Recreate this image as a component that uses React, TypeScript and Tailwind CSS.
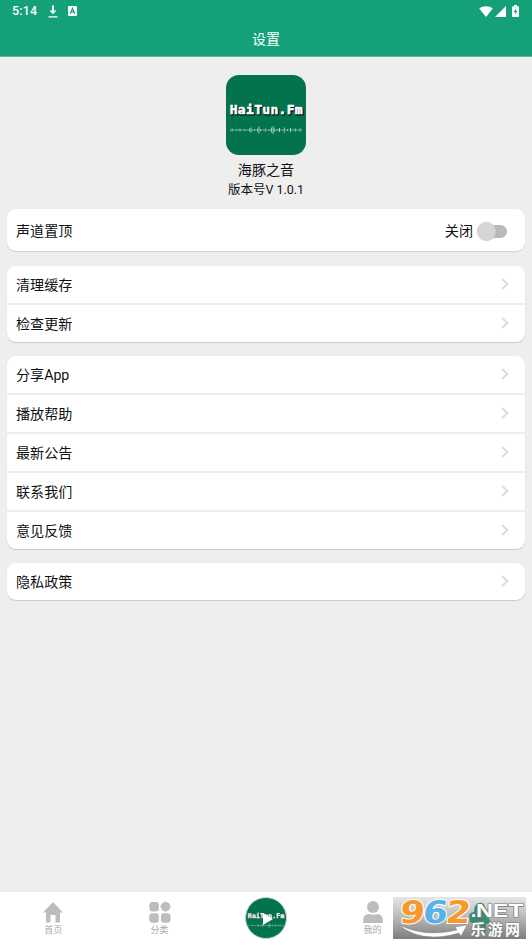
import React, { useState } from "react";

const groups = [
  ["清理缓存", "检查更新"],
  ["分享App", "播放帮助", "最新公告", "联系我们", "意见反馈"],
  ["隐私政策"],
];

// bar heights of the little sound wave under the logo text
const wave = [1, 3, 1, 1, 2, 1, 3, 1, 1, 2, 1, 1, 3, 5, 1, 2, 1, 3, 7, 2, 1, 1, 3, 1, 1, 2, 5, 8, 3, 1, 2, 4, 1, 1, 5, 1, 2, 1, 4, 1, 1, 3, 1, 1, 3, 1];

function LogoArt({ className }: { className: string }) {
  return (
    <svg className={className} viewBox="0 0 80 80">
      <g
        fontFamily="'DejaVu Sans Mono', monospace"
        fontWeight="bold"
        fontSize="13"
        textAnchor="middle"
        strokeLinejoin="round"
      >
        <text x="41.2" y="40.4" textLength="73" fill="#001a10" stroke="#001a10" strokeWidth="1.2">
          HaiTun.Fm
        </text>
        <text x="40.2" y="39.4" textLength="73" fill="#fff" stroke="#fff" strokeWidth="0.6">
          HaiTun.Fm
        </text>
      </g>
      <g fill="#a9d3c1">
        {wave.map((h, i) => (
          <rect key={i} x={4 + i * 1.58} y={55 - h / 2} width="1" height={h} />
        ))}
      </g>
    </svg>
  );
}

function StatusBar() {
  return (
    <div className="flex h-[22px] items-center pl-[12px] pr-[13px] text-white">
      <span className="font-['Roboto',sans-serif] text-[12.5px] font-medium leading-none tracking-[0.2px]">
        5:14
      </span>
      <svg className="ml-[11px] h-[13px] w-[10px]" viewBox="0 0 10 13" fill="currentColor">
        <path d="M4 .5h2v5h2.600L5 9.200 1.400 5.500H4zM.5 11.300h9v1.100h-9z" />
      </svg>
      <svg className="ml-[10px] h-[10px] w-[9px]" viewBox="0 0 9 10">
        <rect width="9" height="10" rx="1" fill="#fff" />
        <path d="M2.300 7.700 4.500 2.300l2.200 5.400M3.200 5.900h2.600" fill="none" stroke="#14a079" strokeWidth="1.200" />
      </svg>
      <svg className="ml-auto h-[11px] w-[14px]" viewBox="0 0 14 11" fill="currentColor">
        <path d="M7 11 .2 2.500C4-.6 10-.6 13.800 2.500z" />
      </svg>
      <svg className="ml-[2px] h-[11px] w-[11px]" viewBox="0 0 11 11" fill="currentColor">
        <path d="M11 0v11H0z" />
      </svg>
      <svg className="ml-[6px] h-[12px] w-[7px]" viewBox="0 0 7 12">
        <path d="M2 0h3v1.300h1.200q.8 0 .8.800v9.100q0 .8-.8.800H.8q-.8 0-.8-.8V2.100q0-.8.800-.8H2z" fill="#fff" />
        <path d="M4.100 3.200 1.800 7h1.500v2.800L5.400 6H4.100z" fill="#14a079" />
      </svg>
    </div>
  );
}

function Row({ label }: { label: string }) {
  return (
    <div className="flex h-[37px] items-center justify-between pl-[9px] pr-[16px]">
      <span className="pt-[2px] text-[14.1px] leading-none">{label}</span>
      <svg className="mb-[1px] h-[12px] w-[8px]" viewBox="0 0 8 12" fill="none" stroke="#dcdcdc" strokeWidth="2">
        <path d="M1.200 1 6.300 6 1.200 11" />
      </svg>
    </div>
  );
}

function Watermark() {
  return (
    <svg className="absolute left-[393px] top-[5px] h-[42px] w-[133px] overflow-visible" viewBox="0 0 133 42">
      <defs>
        <linearGradient id="plate" x1="0" y1="0" x2="0" y2="1">
          <stop offset="0" stopColor="#e6e6e6" />
          <stop offset="0.500" stopColor="#b7b7b7" />
          <stop offset="1" stopColor="#7d7d7d" />
        </linearGradient>
      </defs>
      <rect width="133" height="42" fill="url(#plate)" />
      <path d="M76 18q2-3 5-3 0-8 5-9 5-1 6 4 4 5 3 9l3 7-5 1v8H83v-8l-6-2z" fill="#398c70" />
      <g
        fontFamily="'DejaVu Sans', sans-serif"
        fontWeight="bold"
        fontSize="31"
        stroke="#fff"
        strokeWidth="2"
        strokeLinejoin="round"
        paintOrder="stroke"
        transform="translate(3.500 0) skewX(-7)"
      >
        <text x="5.500" y="25.500" textLength="25" lengthAdjust="spacingAndGlyphs" fill="#f7982a">9</text>
        <text x="28.500" y="25.500" textLength="25" lengthAdjust="spacingAndGlyphs" fill="#58b1e8">6</text>
        <text x="51.500" y="25.500" textLength="25" lengthAdjust="spacingAndGlyphs" fill="#f7982a">2</text>
      </g>
      <path d="M6 28q27 13 58 5l-2-3 12-2-6 11-2-3Q29 47 6 28z" fill="#fff" stroke="#888" strokeWidth="0.500" />
      <g fill="#fff" stroke="#777d7a" strokeWidth="1.200" paintOrder="stroke">
        <text x="78" y="19.500" fontFamily="'Liberation Sans', sans-serif" fontWeight="bold" fontSize="18">
          .
        </text>
        <g fontFamily="'Liberation Sans', sans-serif" fontSize="18" fontWeight="bold">
          <text x="83" y="19.500" textLength="17" lengthAdjust="spacingAndGlyphs">N</text>
          <text x="100" y="19.500" textLength="15" lengthAdjust="spacingAndGlyphs">E</text>
          <text x="115.500" y="19.500" textLength="15" lengthAdjust="spacingAndGlyphs">T</text>
        </g>
        <text x="77.500" y="37.500" fontFamily="'Noto Sans CJK SC', sans-serif" fontWeight="bold" fontSize="15" textLength="49.500">
          乐游网
        </text>
      </g>
    </svg>
  );
}

function BottomNav() {
  return (
    <nav className="relative grid h-[53px] grid-cols-5 bg-white text-[9px] leading-none text-[#aaaaaa]">
      <div className="flex flex-col items-center pt-[9px]">
        <svg className="h-[22px] w-[20px]" viewBox="0 0 20 22" fill="#bdbdbd">
          <path d="M10 1 20 11.500h-3V21.500h-4.500V14h-5v7.500H3v-10H0z" />
        </svg>
        <span className="mt-[3px]">首页</span>
      </div>
      <div className="flex flex-col items-center pt-[9px]">
        <svg className="h-[22px] w-[22px]" viewBox="0 0 22 22" fill="#bdbdbd">
          <rect x="0.300" y="1" width="9.500" height="9.500" rx="3" />
          <path d="m16.500.600 3.600 1.700 1.500 3.200-1.500 3.400-3.600 1.800-3.600-1.800-1.500-3.400 1.500-3.200z" />
          <rect x="0.300" y="12.300" width="9.500" height="9.500" rx="3" />
          <rect x="12" y="12.300" width="9.500" height="9.500" rx="3" />
        </svg>
        <span className="mt-[3px]">分类</span>
      </div>
      <div className="flex justify-center pt-[5px]">
        <div className="relative h-[42px] w-[42px] overflow-hidden rounded-full border border-[#b9d9cb] bg-[#03734e]">
          <LogoArt className="h-[40px] w-[40px]" />
          <svg className="absolute left-[17px] top-[15px] h-[12px] w-[10px]" viewBox="0 0 10 12" fill="#fff">
            <path d="M0 0 10 6 0 12z" />
          </svg>
        </div>
      </div>
      <div className="flex flex-col items-center pt-[9px]">
        <svg className="ml-[1px] h-[22px] w-[20px]" viewBox="0 0 20 22" fill="#bdbdbd">
          <circle cx="10" cy="6" r="6" />
          <path d="M.2 22v-2.500Q.2 13 6 13q4 1.500 8 0 5.800 0 5.800 6.500V22z" />
        </svg>
        <span className="mt-[3px]">我的</span>
      </div>
      <Watermark />
    </nav>
  );
}

function App() {
  const [pinned, setPinned] = useState(false);

  return (
    <div className="flex h-[945px] w-[532px] flex-col overflow-hidden bg-[#eeeeee] font-['Roboto','Noto_Sans_CJK_SC',sans-serif] text-[#111111]">
      <header className="h-[57px] border-b border-[#5fb99d] bg-[#14a079] text-white">
        <StatusBar />
        <h1 className="pt-[10px] text-center text-[14px] leading-none">设置</h1>
      </header>

      <main className="flex-1 px-[7px] pt-[18px]">
        <div className="flex h-[134px] flex-col items-center">
          <div className="h-[80px] w-[80px] rounded-[13px] bg-[#03734e]">
            <LogoArt className="h-[80px] w-[80px]" />
          </div>
          <h2 className="mt-[8px] text-[14.1px] leading-none">海豚之音</h2>
          <p className="mt-[7px] text-[12.5px] leading-none">版本号V 1.0.1</p>
        </div>

        <div className="flex h-[42px] items-center justify-between rounded-[9px] bg-white pl-[9px] pr-[18px] pt-[2px] shadow-[0_1px_1px_rgba(0,0,0,0.12)]">
          <span className="text-[14.1px] leading-none">声道置顶</span>
          <button className="flex items-center" onClick={() => setPinned(!pinned)}>
            <span className="text-[14.1px] leading-none">{pinned ? "打开" : "关闭"}</span>
            <span className="ml-[4px] flex h-[19px] w-[30px] items-center">
              <span className="ml-[2px] flex h-[13px] w-[28px] items-center rounded-full bg-[#b9b9b9]">
                <span
                  className={`h-[19px] w-[19px] shrink-0 rounded-full bg-[#d6d6d6] shadow-[0_0_1px_rgba(0,0,0,0.2)] ${
                    pinned ? "ml-[10px]" : "-ml-[2px]"
                  }`}
                />
              </span>
            </span>
          </button>
        </div>

        <div className="mt-[15px] flex flex-col gap-[14px]">
          {groups.map((items) => (
            <div
              key={items[0]}
              className="divide-y-2 divide-[#eeeeee] rounded-[9px] bg-white shadow-[0_1px_1px_rgba(0,0,0,0.16)]"
            >
              {items.map((label, i) => (
                <div key={label} className={i === items.length - 1 ? "h-[37px]" : "h-[39px]"}>
                  <Row label={label} />
                </div>
              ))}
            </div>
          ))}
        </div>
      </main>

      <BottomNav />
    </div>
  );
}

export default App;
